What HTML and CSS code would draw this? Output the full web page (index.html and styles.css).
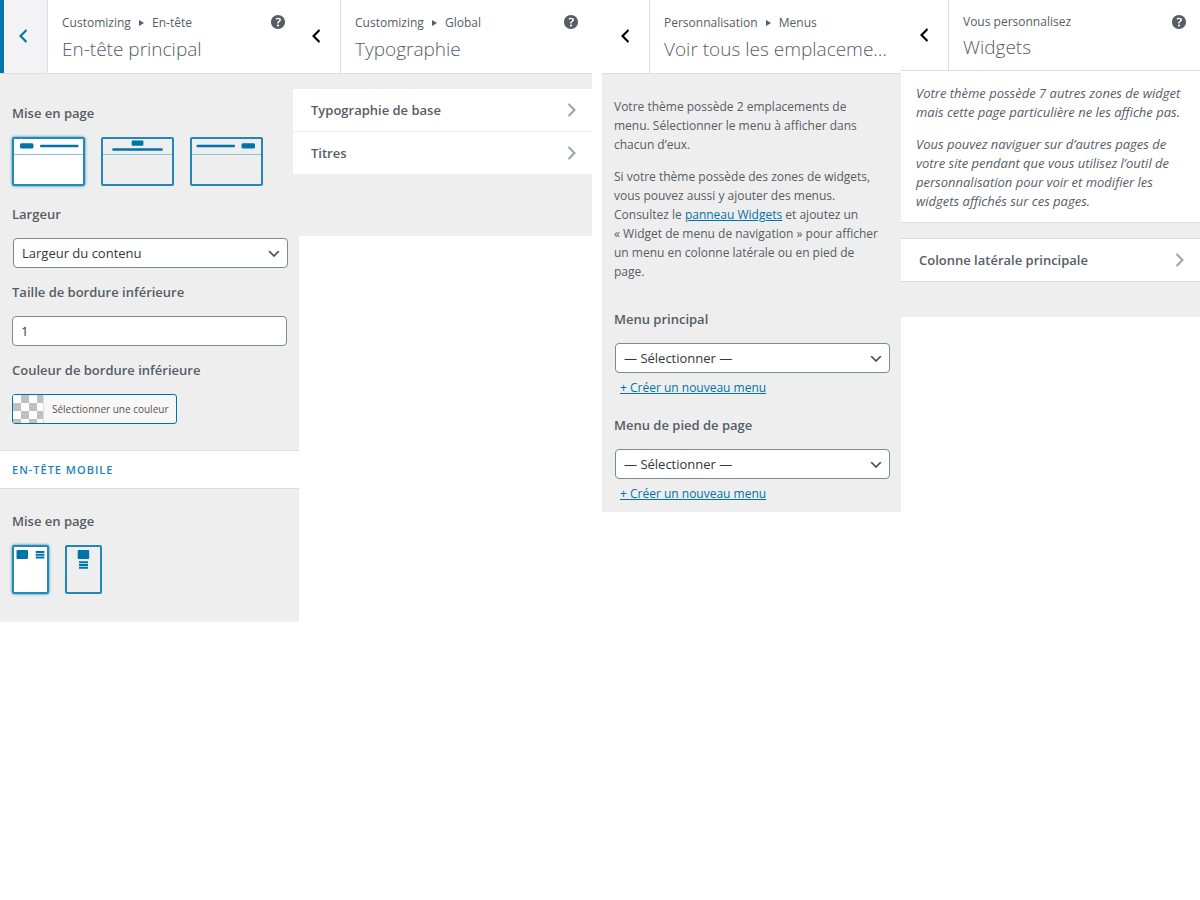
FILE: index.html
```html
<!DOCTYPE html>
<html lang="fr">
<head>
    <meta charset="UTF-8">
    <meta name="viewport" content="width=device-width, initial-scale=1.0">
    <title>Personnalisation</title>
    <link rel="stylesheet" href="styles.css">
</head>
<body>

    <!-- Shared icons -->
    <svg class="sprite" aria-hidden="true">
        <symbol id="icon-back" viewBox="0 0 20 20">
            <path d="M14 5l-5 5 5 5-1 2-7-7 7-7z"/>
        </symbol>
        <symbol id="icon-next" viewBox="0 0 20 20">
            <path d="M6 15l5-5-5-5 1-2 7 7-7 7z"/>
        </symbol>
        <symbol id="icon-help" viewBox="0 0 20 20">
            <path d="M17 10c0-3.87-3.14-7-7-7-3.87 0-7 3.13-7 7s3.13 7 7 7c3.86 0 7-3.13 7-7zm-6.3 1.48H9.14v-.43c0-.38.08-.7.24-.98s.46-.57.88-.89c.41-.29.68-.53.81-.71.14-.18.2-.39.2-.62 0-.25-.09-.44-.28-.58-.19-.13-.45-.19-.79-.19-.58 0-1.25.19-2 .57l-.64-1.28c.87-.49 1.8-.74 2.77-.74.81 0 1.45.2 1.92.58.48.39.71.91.71 1.55 0 .43-.09.8-.29 1.11-.19.32-.57.67-1.11 1.06-.38.28-.61.49-.71.63-.1.15-.15.34-.15.57v.35zm-1.47 2.74c-.18-.17-.27-.42-.27-.73 0-.33.08-.58.26-.75s.43-.25.77-.25c.32 0 .57.09.75.26s.27.42.27.74c0 .3-.09.55-.27.72-.18.18-.43.27-.75.27-.33 0-.58-.09-.76-.26z"/>
        </symbol>
        <symbol id="icon-down" viewBox="0 0 20 20">
            <path d="M5 6l5 5 5-5 2 1-7 7-7-7 2-1z"/>
        </symbol>
    </svg>

    <main class="panels">

        <!-- Header settings -->
        <section class="panel">
            <header class="panel-header">
                <button type="button" class="back active" aria-label="Retour"><svg><use href="#icon-back"/></svg></button>
                <h2 class="title">
                    <span class="crumbs">Customizing <i class="arrow"></i> En-tête</span>
                    <span class="name">En-tête principal</span>
                </h2>
                <button type="button" class="help" aria-label="Aide"><svg><use href="#icon-help"/></svg></button>
            </header>
            <div class="panel-body controls">
                <fieldset class="control layouts">
                    <legend class="label">Mise en page</legend>
                    <div class="options">
                        <label class="option">
                            <input type="radio" name="layout" aria-label="Logo à gauche" checked>
                            <svg width="73" height="49" viewBox="0 0 73 49">
                                <rect class="frame" x="1" y="1" width="71" height="47" rx="1"/>
                                <path class="thin" d="M2 17.5h69"/>
                                <rect x="8" y="6.2" width="13.5" height="5.4" rx="1.5"/>
                                <rect x="28" y="7.7" width="38.5" height="2.5" rx="1"/>
                            </svg>
                        </label>
                        <label class="option">
                            <input type="radio" name="layout" aria-label="Logo centré">
                            <svg width="73" height="49" viewBox="0 0 73 49">
                                <rect class="frame" x="1" y="1" width="71" height="47" rx="1"/>
                                <path class="thin" d="M2 17.5h69"/>
                                <rect x="30.7" y="3.6" width="11.7" height="5.2" rx="1"/>
                                <rect x="11.2" y="11.2" width="50.6" height="2.5" rx="1"/>
                            </svg>
                        </label>
                        <label class="option">
                            <input type="radio" name="layout" aria-label="Logo à droite">
                            <svg width="73" height="49" viewBox="0 0 73 49">
                                <rect class="frame" x="1" y="1" width="71" height="47" rx="1"/>
                                <path class="thin" d="M2 17.5h69"/>
                                <rect x="6.5" y="7.7" width="38.5" height="2.5" rx="1"/>
                                <rect x="51.5" y="6.2" width="13.5" height="5.4" rx="1.5"/>
                            </svg>
                        </label>
                    </div>
                </fieldset>
                <div class="control">
                    <label class="label" for="width">Largeur</label>
                    <div class="select">
                        <select id="width">
                            <option>Largeur du contenu</option>
                        </select>
                        <svg><use href="#icon-down"/></svg>
                    </div>
                </div>
                <div class="control">
                    <label class="label" for="border-size">Taille de bordure inférieure</label>
                    <input class="text" type="text" id="border-size" value="1">
                </div>
                <div class="control">
                    <span class="label">Couleur de bordure inférieure</span>
                    <button type="button" class="color">
                        <span class="swatch"></span>
                        <span class="color-text">Sélectionner une couleur</span>
                    </button>
                </div>
            </div>
            <h3 class="group-title">En-tête mobile</h3>
            <div class="panel-body controls mobile">
                <fieldset class="control layouts">
                    <legend class="label">Mise en page</legend>
                    <div class="options">
                        <label class="option">
                            <input type="radio" name="mobile-layout" aria-label="En ligne" checked>
                            <svg width="37" height="49" viewBox="0 0 37 49">
                                <rect class="frame" x="1" y="1" width="35" height="47" rx="1"/>
                                <rect x="4.5" y="5" width="11.5" height="9" rx="1"/>
                                <path class="lines" d="M23.7 7h8.7M23.7 9.8h8.7M23.7 12.6h8.7"/>
                            </svg>
                        </label>
                        <label class="option">
                            <input type="radio" name="mobile-layout" aria-label="Empilé">
                            <svg width="37" height="49" viewBox="0 0 37 49">
                                <rect class="frame" x="1" y="1" width="35" height="47" rx="1"/>
                                <rect x="12.7" y="5" width="11.5" height="9" rx="1"/>
                                <path class="lines" d="M14 17.2h9M14 20h9M14 22.8h9"/>
                            </svg>
                        </label>
                    </div>
                </fieldset>
            </div>
        </section>

        <!-- Typography -->
        <section class="panel overlap">
            <header class="panel-header">
                <button type="button" class="back" aria-label="Retour"><svg><use href="#icon-back"/></svg></button>
                <h2 class="title">
                    <span class="crumbs">Customizing <i class="arrow"></i> Global</span>
                    <span class="name">Typographie</span>
                </h2>
                <button type="button" class="help" aria-label="Aide"><svg><use href="#icon-help"/></svg></button>
            </header>
            <div class="panel-body menu-body">
                <ul class="menu">
                    <li><a href="#">Typographie de base <svg><use href="#icon-next"/></svg></a></li>
                    <li><a href="#">Titres <svg><use href="#icon-next"/></svg></a></li>
                </ul>
            </div>
        </section>

        <!-- Menu locations -->
        <section class="panel spaced">
            <header class="panel-header">
                <button type="button" class="back" aria-label="Retour"><svg><use href="#icon-back"/></svg></button>
                <h2 class="title">
                    <span class="crumbs">Personnalisation <i class="arrow"></i> Menus</span>
                    <span class="name">Voir tous les emplaceme…</span>
                </h2>
            </header>
            <div class="panel-body locations">
                <p>Votre thème possède 2 emplacements de<br>menu. Sélectionner le menu à afficher dans<br>chacun d’eux.</p>
                <p>Si votre thème possède des zones de widgets,<br>vous pouvez aussi y ajouter des menus.<br>Consultez le <a href="#">panneau Widgets</a> et ajoutez un<br>« Widget de menu de navigation » pour afficher<br>un menu en colonne latérale ou en pied de<br>page.</p>
                <div class="location">
                    <label class="label" for="menu-main">Menu principal</label>
                    <div class="select">
                        <select id="menu-main">
                            <option>— Sélectionner —</option>
                        </select>
                        <svg><use href="#icon-down"/></svg>
                    </div>
                    <a class="create" href="#">+ Créer un nouveau menu</a>
                </div>
                <div class="location">
                    <label class="label" for="menu-footer">Menu de pied de page</label>
                    <div class="select">
                        <select id="menu-footer">
                            <option>— Sélectionner —</option>
                        </select>
                        <svg><use href="#icon-down"/></svg>
                    </div>
                    <a class="create" href="#">+ Créer un nouveau menu</a>
                </div>
            </div>
        </section>

        <!-- Widgets -->
        <section class="panel">
            <header class="panel-header compact">
                <button type="button" class="back" aria-label="Retour"><svg><use href="#icon-back"/></svg></button>
                <h2 class="title">
                    <span class="crumbs">Vous personnalisez</span>
                    <span class="name">Widgets</span>
                </h2>
                <button type="button" class="help" aria-label="Aide"><svg><use href="#icon-help"/></svg></button>
            </header>
            <div class="notice">
                <p>Votre thème possède 7 autres zones de widget<br>mais cette page particulière ne les affiche pas.</p>
                <p>Vous pouvez naviguer sur d’autres pages de<br>votre site pendant que vous utilisez l’outil de<br>personnalisation pour voir et modifier les<br>widgets affichés sur ces pages.</p>
            </div>
            <div class="panel-body widget-body">
                <ul class="menu bordered">
                    <li><a href="#">Colonne latérale principale <svg><use href="#icon-next"/></svg></a></li>
                </ul>
            </div>
        </section>

    </main>

</body>
</html>
```
FILE: styles.css
```css
* {
    box-sizing: border-box;
}

body {
    margin: 0;
    background: #fff;
    color: #555d66;
    font-family: "Open Sans", "Noto Sans", sans-serif;
    font-size: 12px;
    line-height: 19px;
}

button, input, select {
    font-family: inherit;
}

p {
    margin: 0 0 13px;
    white-space: nowrap;
}

a {
    color: #0073aa;
}

.sprite {
    position: absolute;
    width: 0;
    height: 0;
}

.panels {
    display: flex;
    align-items: flex-start;
}

.panel {
    flex: 1 1 0;
    min-width: 0;
}

.overlap {
    margin-left: -6px;
}

.spaced {
    margin-left: 10px;
}

/* Panel header */
.panel-header {
    display: flex;
    height: 74px;
    background: #fff;
    border-bottom: 1px solid #ddd;
}

.back {
    flex: none;
    width: 48px;
    padding: 0 6px 2px 0;
    background: #fff;
    border: 0;
    border-left: 4px solid #fff;
    border-right: 1px solid #ddd;
    color: #000;
}

.back svg {
    display: block;
    width: 20px;
    height: 20px;
    margin: 0 auto;
    fill: currentColor;
}

.back.active {
    background: #f3f3f5;
    border-left-color: #0073aa;
    color: #0073aa;
}

.title {
    flex: 1;
    min-width: 0;
    margin: 0;
    padding: 12px 0 0 14px;
    font-weight: 400;
}

.crumbs {
    display: block;
    font-size: 12px;
    line-height: 22px;
}

.arrow {
    display: inline-block;
    margin: 0 5px 1px;
    border: 3px solid transparent;
    border-left: 5px solid #555d66;
    border-right: 0;
}

.name {
    display: block;
    font-size: 19px;
    font-weight: 300;
    line-height: 30px;
    white-space: nowrap;
}

.help {
    align-self: flex-start;
    width: 20px;
    height: 20px;
    margin: 12px 11px 0 0;
    padding: 0;
    background: none;
    border: 0;
    color: #555d66;
}

.help svg {
    display: block;
    width: 20px;
    height: 20px;
    fill: currentColor;
}

.compact {
    height: 71px;
}

.compact .back {
    padding-bottom: 0;
}

.compact .title {
    padding-top: 11px;
}

.compact .name {
    line-height: 28px;
}

.panel-body {
    background: #eee;
}

/* Controls */
.controls {
    padding: 27px 12px 26px;
}

.mobile {
    padding: 20px 12px 28px;
}

.control {
    margin: 0 0 12px;
    padding: 0;
    border: 0;
}

.layouts {
    margin-bottom: 16px;
}

.control:last-child {
    margin-bottom: 0;
}

.label {
    display: block;
    margin-bottom: 12px;
    padding: 0;
    font-size: 13px;
    font-weight: 600;
    line-height: 24px;
}

.options {
    display: flex;
    gap: 16px;
}

.option {
    position: relative;
    border-radius: 3px;
}

.option input {
    position: absolute;
    inset: 0;
    margin: 0;
    opacity: 0;
}

.option svg {
    display: block;
    fill: #0073aa;
}

.option .frame {
    fill: none;
    stroke: #0073aa;
    stroke-width: 2;
    stroke-opacity: .85;
}

.option .thin {
    stroke: #8fc0d8;
}

.option .lines {
    stroke: #0073aa;
    stroke-width: 2;
}

.option:has(input:checked) {
    background: #fff;
    box-shadow: 0 0 3px #0085ba;
}

.select {
    position: relative;
    margin: 0 -1px 0 1px;
}

.select select,
.text {
    display: block;
    width: 100%;
    height: 30px;
    padding: 0 8px;
    background: #fff;
    border: 1px solid #7e8993;
    border-radius: 4px;
    color: #32373c;
    font-size: 13px;
    appearance: none;
}

.select svg {
    position: absolute;
    top: 8px;
    right: 6px;
    width: 16px;
    height: 16px;
    fill: #555;
    pointer-events: none;
}

.color {
    display: flex;
    height: 30px;
    padding: 0;
    overflow: hidden;
    background: #f7f7f7;
    border: 1px solid #0073aa;
    border-radius: 3px;
    color: #555;
    font-size: 10px;
    line-height: 28px;
}

.swatch {
    width: 31px;
    border-right: 1px solid #ddd;
    background: #fff repeating-conic-gradient(#c0c0c0 0 25%, #fff 0 50%) 8px 8px / 16px 16px;
}

.color-text {
    padding: 0 8px;
}

.group-title {
    margin: 0;
    padding: 0 12px;
    background: #fff;
    border-top: 1px solid #ddd;
    border-bottom: 1px solid #ddd;
    color: #1a85b8;
    font-size: 11px;
    font-weight: 600;
    letter-spacing: 1px;
    line-height: 37px;
    text-transform: uppercase;
}

/* Link lists */
.menu-body {
    padding: 15px 0 62px;
}

.widget-body {
    padding: 15px 0 35px;
}

.menu {
    margin: 0;
    padding: 0;
    list-style: none;
}

.menu li + li {
    border-top: 1px solid #eee;
}

.menu.bordered {
    border-top: 1px solid #ddd;
    border-bottom: 1px solid #ddd;
}

.menu a {
    display: flex;
    justify-content: space-between;
    align-items: center;
    height: 42px;
    padding: 0 10px 0 18px;
    background: #fff;
    color: #555d66;
    font-size: 13px;
    font-weight: 600;
    text-decoration: none;
}

.menu svg {
    width: 20px;
    height: 20px;
    fill: #a0a5aa;
}

/* Menu locations */
.locations {
    padding: 23px 12px 9px;
}

.location {
    padding-top: 13px;
}

.location + .location {
    padding-top: 16px;
}

.create {
    display: inline-block;
    margin: 5px 0 0 6px;
}

/* Widget notice */
.notice {
    padding: 13px 15px 11px;
    background: #fff;
    border-bottom: 1px solid #ddd;
    font-size: 13px;
    font-style: italic;
}

.notice p:last-child {
    margin-bottom: 0;
}
```
